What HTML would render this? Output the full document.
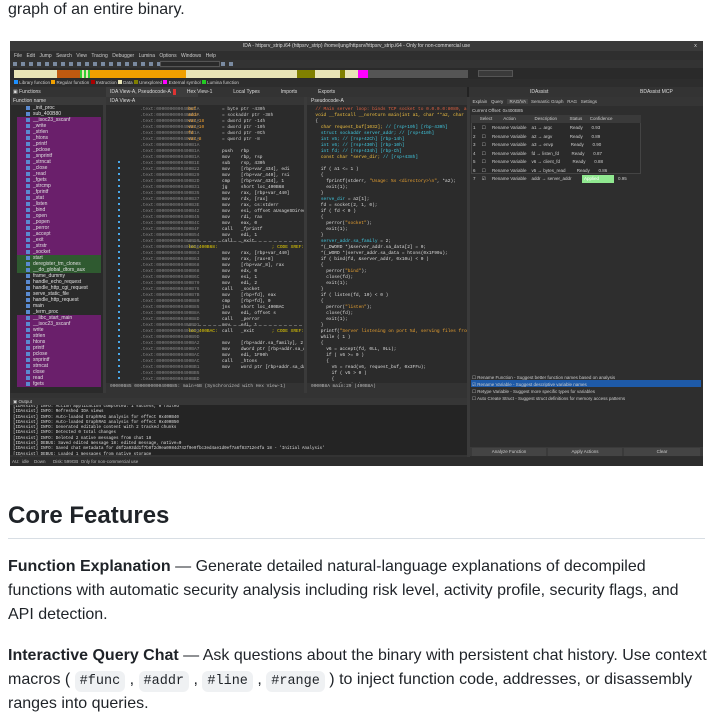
<!DOCTYPE html>
<html><head><meta charset="utf-8">
<style>
*{margin:0;padding:0;box-sizing:border-box}
body{width:713px;height:724px;background:#fff;font-family:"Liberation Sans",sans-serif;color:#1f2328;position:relative;overflow:hidden}
.a{position:absolute}
.t{font-size:16px;line-height:24px;position:absolute;left:8px;white-space:nowrap}
.ss{position:absolute;left:10px;top:41px;width:693px;height:425px;background:#2d2d2d;overflow:hidden;font-family:"Liberation Mono",monospace;font-size:4.5px;color:#c8c8c8}
.ss div{position:absolute}
.clip{overflow:hidden}
.ln{white-space:pre;line-height:6px}
.fl div{position:static;height:6px;line-height:6px;padding-left:9px;white-space:nowrap;color:#e0e0e0;font-size:5px;font-family:"Liberation Sans",sans-serif}
.fl div::before{content:"";display:inline-block;width:4px;height:4px;background:#5a8ad0;margin-right:3px;vertical-align:middle}
.p{background:#6a1f6b}.g{background:#2f5a30}
code{font-family:"Liberation Mono",monospace;font-size:13.5px;background:#eff1f3;border-radius:6px;padding:3px 5px}
</style></head><body>
<div class="t" style="top:-2px;">graph of an entire binary.</div>

<div class="ss">
 <div style="left:0;top:0;width:693px;height:10px;background:#3a3a3a;"></div>
 <div style="left:0;top:2px;width:693px;text-align:center;color:#ddd;font-family:'Liberation Sans';font-size:5px">IDA - httpsrv_strip.i64 (httpsrv_strip) /home/jung/httpsrv/httpsrv_strip.i64 - Only for non-commercial use</div>
 <div style="left:684px;top:2px;color:#ddd;font-size:5px">x</div>
 <div style="left:0;top:10px;width:693px;height:9px;background:#2f2f2f;"></div>
 <div style="left:4px;top:12px;color:#ccc;font-family:'Liberation Sans';font-size:5px;word-spacing:3px">File Edit Jump Search View Tracing Debugger Lumina Options Windows Help</div>
 <div style="left:0;top:19px;width:693px;height:8px;background:#333;"></div>
 <div style="left:3px;top:21px;width:220px;height:4px;background:repeating-linear-gradient(90deg,#7a8aa0 0 4px,#333 4px 8px)"></div>
 <div style="left:150px;top:20px;width:60px;height:6px;background:#2a2a2a;border:1px solid #555"></div>
 <div style="left:0;top:27px;width:693px;height:11px;background:#2a2a2a"></div>
 <div style="left:4px;top:29px;width:43px;height:8px;background:#e8e4b6"></div>
 <div style="left:47px;top:29px;width:23px;height:8px;background:#c05a10"></div>
 <div style="left:70px;top:29px;width:10px;height:8px;background:repeating-linear-gradient(90deg,#3c3 0 2px,#e8e4b6 2px 4px)"></div>
 <div style="left:80px;top:29px;width:96px;height:8px;background:#f0a000"></div>
 <div style="left:176px;top:29px;width:111px;height:8px;background:#e8e4b6"></div>
 <div style="left:287px;top:29px;width:18px;height:8px;background:#808000"></div>
 <div style="left:305px;top:29px;width:25px;height:8px;background:#e8e4b6"></div>
 <div style="left:330px;top:29px;width:5px;height:8px;background:#808000"></div>
 <div style="left:335px;top:29px;width:13px;height:8px;background:#e8e4b6"></div>
 <div style="left:348px;top:29px;width:10px;height:8px;background:#f0f"></div>
 <div style="left:358px;top:29px;width:100px;height:8px;background:#555"></div>
 <div style="left:468px;top:29px;width:35px;height:7px;background:#3a3a3a;border:1px solid #555"></div>
 <div style="left:4px;top:39px;color:#ccc;font-family:'Liberation Sans';font-size:4.5px;white-space:nowrap;line-height:6px">
  <span style="background:#1e90ff;display:inline-block;width:4px;height:4px"></span> Library function <span style="background:#f0a000;display:inline-block;width:4px;height:4px"></span> Regular function <span style="background:#a00;display:inline-block;width:4px;height:4px"></span> Instruction <span style="background:#e8e4b6;display:inline-block;width:4px;height:4px"></span> Data <span style="background:#808000;display:inline-block;width:4px;height:4px"></span> Unexplored <span style="background:#f0f;display:inline-block;width:4px;height:4px"></span> External symbol <span style="background:#2c2;display:inline-block;width:4px;height:4px"></span> Lumina function</div>
 <div style="left:0;top:46px;width:693px;height:10px;background:#333"></div>
 <div style="left:3px;top:48px;color:#ddd;font-family:'Liberation Sans';font-size:5px">▣ Functions</div>
 <div style="left:96px;top:46px;width:92px;height:10px;background:#3d3d3d"></div>
 <div style="left:100px;top:48px;color:#ddd;font-family:'Liberation Sans';font-size:5px;white-space:pre">IDA View-A, Pseudocode-A  <span style="background:#d33;color:#d33">x</span>        Hex View-1               Local Types               Imports               Exports</div>
 <div style="left:457px;top:46px;width:2px;height:10px;background:#222"></div>
 <div style="left:520px;top:48px;color:#ddd;font-family:'Liberation Sans';font-size:5px">IDAssist</div>
 <div style="left:630px;top:48px;color:#ddd;font-family:'Liberation Sans';font-size:5px">BDAssist MCP</div>
 <div style="left:1px;top:56px;width:92px;height:296px;background:#2a2a2a"></div>
 <div style="left:1px;top:56px;width:92px;height:8px;background:#3a3a3a;color:#ddd;font-family:'Liberation Sans';font-size:5px;padding-left:2px;line-height:8px">Function name</div>
 <div class="fl clip" style="left:7px;top:64px;width:84px;height:286px">
  <div>_init_proc</div><div>sub_400B80</div><div class="p">__isoc23_sscanf</div><div class="p">_write</div><div class="p">_strlen</div><div class="p">_htons</div><div class="p">_printf</div><div class="p">_pclose</div><div class="p">_snprintf</div><div class="p">_strncat</div><div class="p">_close</div><div class="p">_read</div><div class="p">_fgets</div><div class="p">_strcmp</div><div class="p">_fprintf</div><div class="p">_stat</div><div class="p">_listen</div><div class="p">_bind</div><div class="p">_open</div><div class="p">_popen</div><div class="p">_perror</div><div class="p">_accept</div><div class="p">_exit</div><div class="p">_strstr</div><div class="p">_socket</div><div class="g">start</div><div class="g">deregister_tm_clones</div><div class="g">__do_global_dtors_aux</div><div>frame_dummy</div><div>handle_echo_request</div><div>handle_http_cgi_request</div><div>serve_static_file</div><div>handle_http_request</div><div>main</div><div>_term_proc</div><div class="p">__libc_start_main</div><div class="p">__isoc23_sscanf</div><div class="p">write</div><div class="p">strlen</div><div class="p">htons</div><div class="p">printf</div><div class="p">pclose</div><div class="p">snprintf</div><div class="p">strncat</div><div class="p">close</div><div class="p">read</div><div class="p">fgets</div>
 </div>
 <div style="left:93px;top:56px;width:3px;height:296px;background:#3a3a3a"></div>
 <div class="clip" style="left:96px;top:56px;width:198px;height:286px;background:#2b2b2b">
 <div style="left:0;top:0;width:198px;height:8px;background:#363636;color:#ddd;font-family:'Liberation Sans';font-size:5px;padding-left:4px;line-height:8px">IDA View-A</div>
 <div class="ln" style="left:34px;top:10px;color:#8a8a8a">.text:0000000000400B1A
.text:0000000000400B1A
.text:0000000000400B1A
.text:0000000000400B1A
.text:0000000000400B1A
.text:0000000000400B1A
.text:0000000000400B1A
.text:0000000000400B1A
.text:0000000000400B1A
.text:0000000000400B1E
.text:0000000000400B22
.text:0000000000400B29
.text:0000000000400B2D
.text:0000000000400B31
.text:0000000000400B35
.text:0000000000400B37
.text:0000000000400B3E
.text:0000000000400B42
.text:0000000000400B45
.text:0000000000400B4C
.text:0000000000400B4F
.text:0000000000400B54
.text:0000000000400B59
.text:0000000000400B5E
.text:0000000000400B63
.text:0000000000400B63
.text:0000000000400B68
.text:0000000000400B68
.text:0000000000400B6C
.text:0000000000400B70
.text:0000000000400B76
.text:0000000000400B7B
.text:0000000000400B80
.text:0000000000400B85
.text:0000000000400B8A
.text:0000000000400B8D
.text:0000000000400B91
.text:0000000000400B93
.text:0000000000400B9D
.text:0000000000400BA2
.text:0000000000400BA7
.text:0000000000400BAC
.text:0000000000400BAC
.text:0000000000400BB1
.text:0000000000400BB5
.text:0000000000400BBD</div>
 <div class="ln" style="left:82px;top:10px;color:#f0a030">buf
addr
var_18
var_10
fd
var_8</div>
 <div class="ln" style="left:116px;top:10px;color:#ccc">= byte ptr -430h
= sockaddr ptr -38h
= dword ptr -14h
= dword ptr -10h
= dword ptr -0Ch
= qword ptr -8</div>
 <div class="ln" style="left:116px;top:52px;color:#ddd">push   rbp
mov    rbp, rsp
sub    rsp, 430h
mov    [rbp+var_434], edi
mov    [rbp+var_440], rsi
cmp    [rbp+var_434], 1
jg     short loc_400B68
mov    rax, [rbp+var_440]
mov    rdx, [rax]
mov    rax, cs:stderr
mov    esi, offset aUsageSDirector
mov    rdi, rax
mov    eax, 0
call   _fprintf
mov    edi, 1
call   _exit

mov    rax, [rbp+var_440]
mov    rax, [rax+8]
mov    [rbp+var_8], rax
mov    edx, 0
mov    esi, 1
mov    edi, 2
call   _socket
mov    [rbp+fd], eax
cmp    [rbp+fd], 0
jns    short loc_400BAC
mov    edi, offset s
call   _perror
mov    edi, 1
call   _exit

mov    [rbp+addr.sa_family], 2
mov    dword ptr [rbp+addr.sa_data+2], 0
mov    edi, 1F90h
call   _htons
mov    word ptr [rbp+addr.sa_data], ax</div>
 <div class="ln" style="left:82px;top:148px;color:#e8d000">loc_400B68:                    ; CODE XREF: main</div>
 <div class="ln" style="left:82px;top:232px;color:#e8d000">loc_400BAC:                    ; CODE XREF: main</div>
 <div style="left:82px;top:144px;width:114px;border-top:1px dashed #666"></div>
 <div style="left:82px;top:228px;width:114px;border-top:1px dashed #666"></div>
 <div style="left:12px;top:64px;width:2px;height:220px;background:repeating-linear-gradient(#4aa8e8 0 2px,transparent 2px 6px)"></div>
 </div>
 <div style="left:96px;top:342px;width:198px;height:10px;background:#333;color:#bbb;padding-left:4px;line-height:8px;white-space:nowrap;overflow:hidden">00000B85 0000000000400B85: main+6B (Synchronized with Hex View-1)</div>
 <div style="left:294px;top:56px;width:3px;height:296px;background:#3a3a3a"></div>
 <div class="clip" style="left:297px;top:56px;width:160px;height:286px;background:#2b2b2b">
 <div style="left:0;top:0;width:160px;height:8px;background:#363636;color:#ddd;font-family:'Liberation Sans';font-size:5px;padding-left:4px;line-height:8px">Pseudocode-A</div>
 <div class="ln" style="left:3px;top:10px;color:#ddd"><span style="color:#e06040">  // Main server loop: binds TCP socket to 0.0.0.0:8080, accepts</span>
<span style="color:#f0c040">  void __fastcall __noreturn main(int a1, char **a2, char **a3)</span>
  {
    <span style="color:#f0c040">char request_buf[1032];</span> <span style="color:#40c8e0">// [rsp+10h] [rbp-430h]</span>
    <span style="color:#40c8e0">struct sockaddr server_addr; // [rsp+410h]</span>
    <span style="color:#40c8e0">int v5; // [rsp+42Ch] [rbp-14h]</span>
    <span style="color:#40c8e0">int v6; // [rsp+430h] [rbp-10h]</span>
    <span style="color:#40c8e0">int fd; // [rsp+434h] [rbp-Ch]</span>
    <span style="color:#f0c040">const char *serve_dir;</span> <span style="color:#40c8e0">// [rsp+438h]</span>

    if ( a1 &lt;= 1 )
    {
      fprintf(stderr, <span style="color:#e8a030">"Usage: %s &lt;directory&gt;\n"</span>, *a2);
      exit(1);
    }
    <span style="color:#40c8e0">serve_dir</span> = a2[1];
    fd = socket(2, 1, 0);
    if ( fd &lt; 0 )
    {
      perror(<span style="color:#e8a030">"socket"</span>);
      exit(1);
    }
    <span style="color:#40c8e0">server_addr.sa_family</span> = 2;
    *(_DWORD *)&amp;server_addr.sa_data[2] = 0;
    *(_WORD *)server_addr.sa_data = htons(0x1F90u);
    if ( bind(fd, &amp;server_addr, 0x10u) &lt; 0 )
    {
      perror(<span style="color:#e8a030">"bind"</span>);
      close(fd);
      exit(1);
    }
    if ( listen(fd, 10) &lt; 0 )
    {
      perror(<span style="color:#e8a030">"listen"</span>);
      close(fd);
      exit(1);
    }
    printf(<span style="color:#e8a030">"Server listening on port %d, serving files from %s\n"</span>, 
    while ( 1 )
    {
      v6 = accept(fd, 0LL, 0LL);
      if ( v6 &gt;= 0 )
      {
        v5 = read(v6, request_buf, 0x3FFu);
        if ( v5 &gt; 0 )
        {
          close(v6);
        }
        else
        {
          request_buf[v5] = 0;
          handle_http_request(v6, serve_dir, request_buf);</div>
 </div>
 <div style="left:297px;top:342px;width:160px;height:10px;background:#333;color:#bbb;padding-left:4px;line-height:8px">0000B8A main:29 (400B8A)</div>
 <div style="left:457px;top:56px;width:3px;height:400px;background:#3a3a3a"></div>
 <div style="left:460px;top:56px;width:233px;height:369px;background:#2e2e2e"></div>
 <div style="left:460px;top:56px;width:233px;height:9px;background:#353535;color:#ccc;font-family:'Liberation Sans';font-size:4.5px;line-height:9px;white-space:pre">  Explain   Query   <span style="background:#444">  RAG/VA  </span>  Semantic Graph   RAG   Settings</div>
 <div style="left:462px;top:67px;color:#ccc;font-family:'Liberation Sans';font-size:4.5px">Current Offset: 0x400B85</div>
 <div style="left:461px;top:74px;width:170px;height:59px;background:#2a2a2a;border:1px solid #444"></div>
 <div style="left:461px;top:74px;width:170px;height:8px;background:#3a3a3a;color:#ccc;font-family:'Liberation Sans';font-size:4.5px;line-height:8px;white-space:pre">       Select         Action               Description          Status      Confidence</div>
 <div class="ln" style="left:463px;top:83px;color:#ccc;font-family:'Liberation Sans';font-size:4.5px;line-height:8.5px">1     ☐     Rename Variable    a1 → argc              Ready       0.93
2     ☐     Rename Variable    a2 → argv              Ready       0.89
3     ☐     Rename Variable    a3 → envp              Ready       0.90
4     ☐     Rename Variable    fd → listen_fd          Ready       0.87
5     ☐     Rename Variable    v6 → client_fd          Ready       0.88
6     ☐     Rename Variable    v5 → bytes_read         Ready       0.86
7     ☑     Rename Variable    addr → server_addr      </div>
 <div style="left:572px;top:134px;width:32px;height:8px;background:#90e890;color:#fff;font-family:'Liberation Sans';font-size:4.5px;line-height:8px;padding-left:2px">Applied</div>
 <div style="left:608px;top:135px;color:#ccc;font-family:'Liberation Sans';font-size:4.5px">0.95</div>
 <div style="left:461px;top:339px;width:230px;height:7px;background:#1e5aa8"></div>
 <div class="ln" style="left:462px;top:333px;color:#ccc;font-family:'Liberation Sans';font-size:4.5px;line-height:7px">☐ Rename Function - Suggest better function names based on analysis
☑ Rename Variable - Suggest descriptive variable names
☐ Retype Variable - Suggest more specific types for variables
☐ Auto Create Struct - Suggest struct definitions for memory access patterns</div>
 <div style="left:460px;top:406px;width:233px;height:9px;background:#3a3a3a"></div>
 <div style="left:462px;top:407px;width:74px;height:8px;background:#444;color:#ccc;font-family:'Liberation Sans';font-size:4.5px;text-align:center;line-height:8px">Analyze Function</div>
 <div style="left:538px;top:407px;width:74px;height:8px;background:#444;color:#ccc;font-family:'Liberation Sans';font-size:4.5px;text-align:center;line-height:8px">Apply Actions</div>
 <div style="left:614px;top:407px;width:76px;height:8px;background:#444;color:#ccc;font-family:'Liberation Sans';font-size:4.5px;text-align:center;line-height:8px">Clear</div>
 <div style="left:0;top:352px;width:457px;height:5px;background:#333"></div>
 <div style="left:0;top:357px;width:457px;height:7px;background:#363636;color:#ccc;font-family:'Liberation Sans';font-size:4.5px;padding-left:3px;line-height:7px">▣ Output</div>
 <div class="clip" style="left:0;top:364px;width:457px;height:50px;background:#242424">
 <div class="ln" style="left:3px;top:0;color:#ddd;font-size:4.2px;line-height:5.3px">[IDAssist] INFO: Action application completed: 1 success, 0 failed
[IDAssist] INFO: Refreshed IDA views
[IDAssist] INFO: Auto-loaded GraphRAG analysis for effect 0x400B40
[IDAssist] INFO: Auto-loaded GraphRAG analysis for effect 0x400B50
[IDAssist] INFO: Generated editable content with 2 tracked chunks
[IDAssist] INFO: Detected 0 total changes
[IDAssist] INFO: Deleted 2 native messages from chat 18
[IDAssist] DEBUG: Saved edited message 18: edited message, native=0
[IDAssist] INFO: Saved chat metadata for d6f2a93dd1f7b8f2d9ea0984d742f0e9fbc3ed4ae1d0ef7a6f83712e4fa 18 - 'Initial Analysis'
[IDAssist] DEBUG: Loaded 1 messages from native storage</div>
 </div>
 <div style="left:0;top:414px;width:457px;height:8px;background:#333;color:#ccc;font-family:'Liberation Sans';font-size:4.5px;padding-left:4px;line-height:8px">Python</div>
 <div style="left:0;top:416px;width:693px;height:9px;background:#2d2d2d;color:#bbb;font-family:'Liberation Sans';font-size:4.5px;padding-left:2px;line-height:9px;white-space:pre">AU:  idle    Down      Disk: 599GB  Only for non-commercial use</div>
</div>

<div class="a" style="left:8px;top:501px;font-size:24px;font-weight:bold;line-height:30px">Core Features</div>
<div class="a" style="left:8px;top:538px;width:697px;height:1px;background:#d8dee4"></div>
<div class="t" style="top:555px;"><b>Function Explanation</b> — Generate detailed natural-language explanations of decompiled</div>
<div class="t" style="top:579px;">functions with automatic security analysis including risk level, activity profile, security flags, and</div>
<div class="t" style="top:603px;">API detection.</div>
<div class="t" style="top:644px;"><b>Interactive Query Chat</b> — Ask questions about the binary with persistent chat history. Use context</div>
<div class="t" style="top:668px;">macros ( <code>#func</code> , <code>#addr</code> , <code>#line</code> , <code>#range</code> ) to inject function code, addresses, or disassembly</div>
<div class="t" style="top:692px;">ranges into queries.</div>
</body></html>
